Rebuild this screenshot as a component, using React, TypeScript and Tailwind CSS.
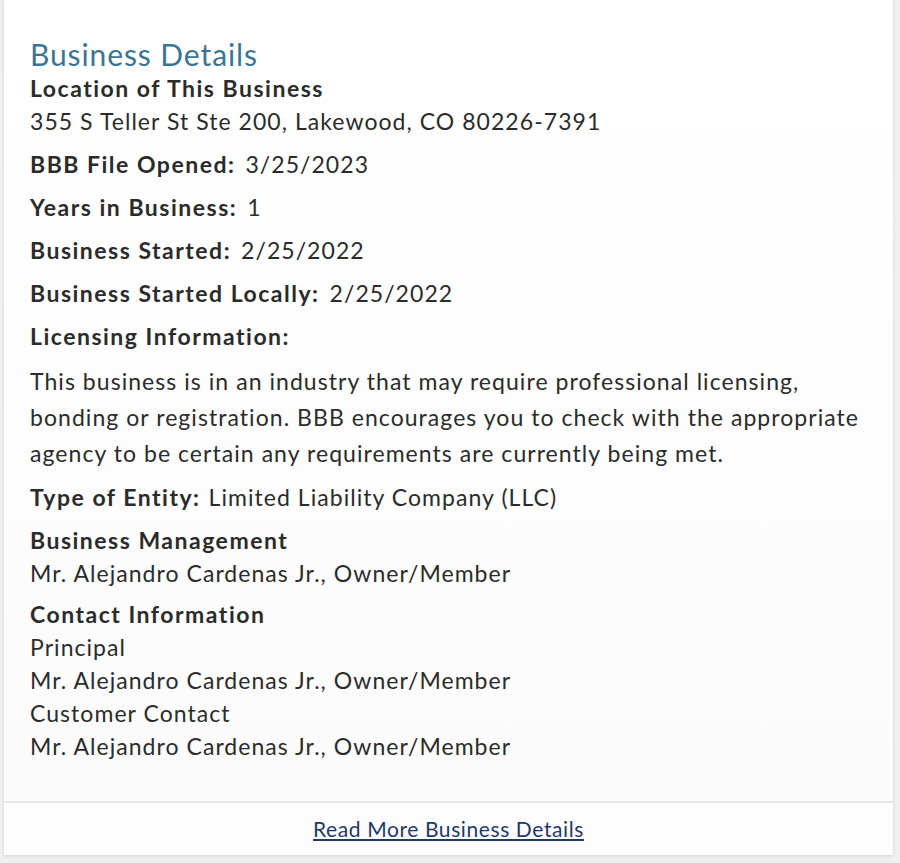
import React from 'react';

const rows: { label: string; value: string }[] = [
  { label: 'BBB File Opened:', value: '3/25/2023' },
  { label: 'Years in Business:', value: '1' },
  { label: 'Business Started:', value: '2/25/2022' },
  { label: 'Business Started Locally:', value: '2/25/2022' },
];

const label = 'font-bold tracking-[1.5px]';

export default function App() {
  return (
    <div className="h-[863px] bg-[#efefef] pl-[4px] pr-[7px] font-['Lato','Liberation_Sans',sans-serif] text-[#2b2b2b]">
      <div className="flex h-[855px] flex-col bg-white shadow-[0_1px_3px_rgba(0,0,0,0.12)]">
        <div className="flex-1 px-[26px] pt-[36px] text-[23px] leading-[33px] tracking-[1.05px] bg-gradient-to-b from-white to-[#fbfbfb]">
          <h2 className="text-[30px] leading-[36px] tracking-[0.9px] text-[#3b7595]">Business Details</h2>
          <div>
            <div className={label}>Location of This Business</div>
            <div>355 S Teller St Ste 200, Lakewood, CO 80226-7391</div>
          </div>
          {rows.map((r) => (
            <div key={r.label} className="mt-[10px]">
              <span className={label}>{r.label}</span>
              <span className="ml-[10px]">{r.value}</span>
            </div>
          ))}
          <div className={`mt-[10px] ${label}`}>Licensing Information:</div>
          <p className="mt-[10px] leading-[36px]">
            This business is in an industry that may require professional licensing, bonding or
            registration. BBB encourages you to check with the appropriate agency to be certain any
            requirements are currently being met.
          </p>
          <div className="mt-[10px]">
            <span className={label}>Type of Entity:</span>
            <span className="ml-[8px]">Limited Liability Company (LLC)</span>
          </div>
          <div className="mt-[10px]">
            <div className={label}>Business Management</div>
            <div>Mr. Alejandro Cardenas Jr., Owner/Member</div>
          </div>
          <div className="mt-[8px]">
            <div className={label}>Contact Information</div>
            <div>Principal</div>
            <div>Mr. Alejandro Cardenas Jr., Owner/Member</div>
            <div>Customer Contact</div>
            <div>Mr. Alejandro Cardenas Jr., Owner/Member</div>
          </div>
        </div>
        <div className="flex h-[54px] items-center justify-center border-t-2 border-[#e8e8e8] bg-[#fdfdfd]">
          <a href="#" className="text-[21px] tracking-[0.6px] text-[#1f3a68] underline underline-offset-2">
            Read More Business Details
          </a>
        </div>
      </div>
    </div>
  );
}
